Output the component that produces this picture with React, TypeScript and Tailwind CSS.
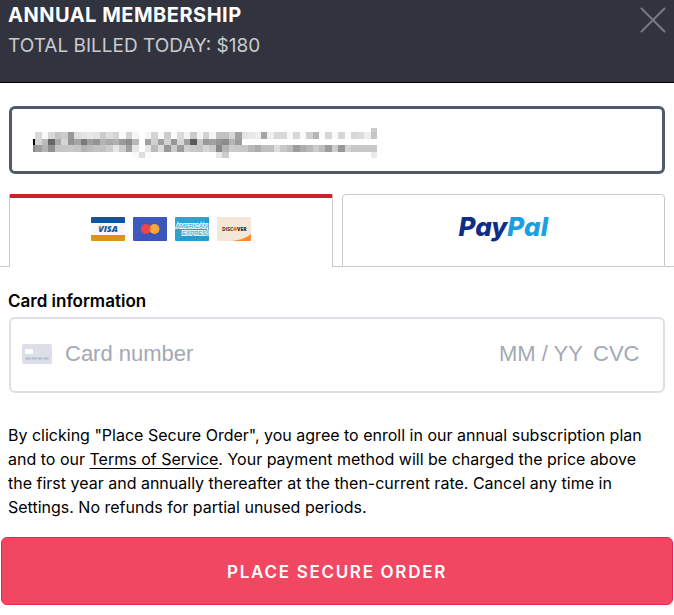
import React from 'react';

// Gray levels of the hidden address, two hex digits per cell, '--' leaves a cell empty
const MASK_ROWS = [
    '--'.repeat(53) + 'cc',
    '--d9f8d8c4cc98dde4e8e4ccded4fad3f5--f5d4faccfad9f2ccf5d2f5c2c2d6a2e4e8eea4eed8d8f8d8fad0b4fcd6fad6fcd8dceec6',
    '00d5bb66aad593a57ba094b4a8b09a8cb8--a0d0a0d298d5a05ac898a0948cb59c------------------------------------------',
    '889db490c4c6c8c4b4bbc2c2cce6cca0e8--e6bbdd98cc9cd0c8c5d5ca88b4cac8c8b8acc0c0ddc8bd9cadb8ccbd9ccc98d4c8c8c8c8',
    '--------------------------------faddfb--------------------e8cc--------------------------------------------ea',
];

function MaskedEmail() {
    return (
        <svg
            className="pointer-events-none absolute left-5 top-5 h-8 w-[348px]"
            viewBox="0 0 54 5"
            preserveAspectRatio="none"
            shapeRendering="crispEdges"
            aria-hidden="true"
        >
            {MASK_ROWS.map((row, y) =>
                (row.match(/../g) ?? []).map((level, x) =>
                    level === '--' ? null : (
                        <rect
                            key={`${x}-${y}`}
                            x={x === 0 ? 0.6 : x}
                            y={y === 0 ? 0.3 : y}
                            width={x === 0 ? 0.4 : 1}
                            height={y === 0 ? 0.7 : 1}
                            fill={`#${level}${level}${level}`}
                        />
                    ),
                ),
            )}
        </svg>
    );
}

function CardLogos() {
    return (
        <span className="flex gap-2">
            <svg width="34" height="24" viewBox="0 0 34 24" role="img" aria-label="Visa">
                <rect width="34" height="24" rx="1" fill="#f8f8fa" />
                <path d="M1 0h32a1 1 0 0 1 1 1v5H0V1a1 1 0 0 1 1-1z" fill="#11559f" />
                <path d="M0 18h34v5a1 1 0 0 1-1 1H1a1 1 0 0 1-1-1z" fill="#dc9414" />
                <text x="17" y="15" textAnchor="middle" fontFamily="Open Sans, sans-serif" fontSize="9" fontWeight="800" fontStyle="italic" fill="#11559f">VISA</text>
                <path d="M7 9h3l1 3z" fill="#e9a02d" />
            </svg>
            <svg width="34" height="24" viewBox="0 0 34 24" role="img" aria-label="Mastercard">
                <rect width="34" height="24" rx="1" fill="#4059bf" />
                <path d="M34 0v24H2z" fill="#3650b5" opacity="0.4" />
                <circle cx="13" cy="12" r="5" fill="#ef4444" />
                <circle cx="21.500" cy="12" r="5" fill="#f9a63a" />
                <path d="M17.200 9.300a5 5 0 0 1 0 5.400a5 5 0 0 1 0-5.400z" fill="#f5692f" />
            </svg>
            <svg width="34" height="24" viewBox="0 0 34 24" role="img" aria-label="American Express">
                <rect width="34" height="24" rx="1" fill="#2ea3cf" />
                <path d="M34 0v24H2z" fill="#1695c7" opacity="0.4" />
                <g fontFamily="Liberation Sans, sans-serif" fontSize="6" fontWeight="400" fill="#2ea3cf" stroke="#d9f0f8" strokeWidth="2" paintOrder="stroke">
                    <text x="1" y="11">AMERICAN</text>
                    <text x="7" y="18">EXPRESS</text>
                </g>
            </svg>
            <svg width="34" height="24" viewBox="0 0 34 24" role="img" aria-label="Discover">
                <rect width="34" height="24" rx="1" fill="#f5e7d8" />
                <path d="M34 17v6a1 1 0 0 1-1 1H15c8-1 14-3 19-7z" fill="#fb8a2e" />
                <g fontFamily="Open Sans, sans-serif" fontSize="5" fontWeight="700" fill="#333333">
                    <text x="5" y="14">DISC</text>
                    <text x="20" y="14" fontWeight="800">VER</text>
                </g>
                <circle cx="18" cy="12" r="2" fill="#f58220" />
            </svg>
        </span>
    );
}

function CardIcon() {
    return (
        <svg className="shrink-0" width="30" height="20" viewBox="0 0 30 20" aria-hidden="true">
            <rect width="30" height="20" rx="2" fill="#dcdfe8" />
            <rect x="3" y="5" width="8" height="5" rx="1" fill="#ffffff" />
            <path d="M3.500 14.500h23" stroke="#b4b8c7" strokeWidth="1.800" strokeDasharray="5 1" />
        </svg>
    );
}

const cardInput = "min-w-0 bg-transparent font-['Liberation_Sans',sans-serif] text-[22px] leading-8 text-gray-900 placeholder:text-[#a3a8b4] outline-none";

export default function App() {
    return (
        <main className="bg-white font-[Inter,sans-serif] text-black">
            <header className="flex items-start justify-between border-b border-black bg-[#31343e] px-2 pb-5">
                <div>
                    <h1 className="text-xl leading-[30px] font-bold tracking-wide text-white">ANNUAL MEMBERSHIP</h1>
                    <p className="text-[19px] leading-8 text-[#c9cacd]">TOTAL BILLED TODAY: $180</p>
                </div>
                <button type="button" aria-label="Close" className="mt-[7px]">
                    <svg width="26" height="26" viewBox="0 0 26 26" fill="none" stroke="#777983" strokeWidth="2" strokeLinecap="round">
                        <path d="M1.500 1.500l23 23M24.500 1.500l-23 23" />
                    </svg>
                </button>
            </header>

            <form className="pt-[23px]" onSubmit={(e) => e.preventDefault()}>
                <div className="relative mx-[9px]">
                    <input
                        type="email"
                        aria-label="Email"
                        className="block h-[68px] w-full rounded-md border-3 border-[#545a6e] px-5 outline-none"
                    />
                    <MaskedEmail />
                </div>

                <div role="tablist" className="mt-5 flex h-[73px]">
                    <span className="w-[9px] border-b border-[#c9c9c9]" />
                    <button
                        type="button"
                        role="tab"
                        aria-selected="true"
                        className="flex flex-1 items-center justify-center rounded-t-xs border-x border-t-4 border-x-[#c9c9c9] border-t-[#cb2229] pb-2"
                    >
                        <CardLogos />
                    </button>
                    <span className="w-[9px] border-b border-[#c9c9c9]" />
                    <button
                        type="button"
                        role="tab"
                        aria-selected="false"
                        className="flex flex-1 items-center justify-center rounded-t-sm border border-[#c9c9c9] pb-2 text-[26px] leading-8 font-extrabold italic text-[#0f2f86]"
                    >
                        Pay<span className="text-[#1c9fdf]">Pal</span>
                    </button>
                    <span className="w-[9px] border-b border-[#c9c9c9]" />
                </div>

                <label htmlFor="card-number" className="mx-2 mt-[22px] block text-[17px] leading-6 font-semibold">
                    Card information
                </label>
                <div className="mx-[9px] mt-1 flex h-[76px] items-center rounded-md border-2 border-[#dfe0e6] pb-0.5 pl-[11px] pr-4">
                    <CardIcon />
                    <input id="card-number" className={`${cardInput} ml-[13px] flex-1`} placeholder="Card number" />
                    <input aria-label="Expiry date" className={`${cardInput} w-[94px]`} placeholder="MM / YY" />
                    <input aria-label="CVC" className={`${cardInput} w-[54px]`} placeholder="CVC" />
                </div>

                <p className="ml-2 mr-4 mt-[30px] text-base leading-6">
                    By clicking "Place Secure Order", you agree to enroll in our annual subscription plan and to our{' '}
                    <a href="#terms" className="underline underline-offset-3">Terms of Service</a>. Your payment method will be
                    charged the price above the first year and annually thereafter at the then-current rate. Cancel any time in
                    Settings. No refunds for partial unused periods.
                </p>

                <div className="px-px pt-[18px] pb-2.5">
                    <button
                        type="submit"
                        className="block h-[68px] w-full rounded-md border border-[#e9254b] bg-[#f24762] pt-1 text-[17px] font-semibold tracking-widest text-white"
                    >
                        PLACE SECURE ORDER
                    </button>
                </div>
            </form>
        </main>
    );
}
